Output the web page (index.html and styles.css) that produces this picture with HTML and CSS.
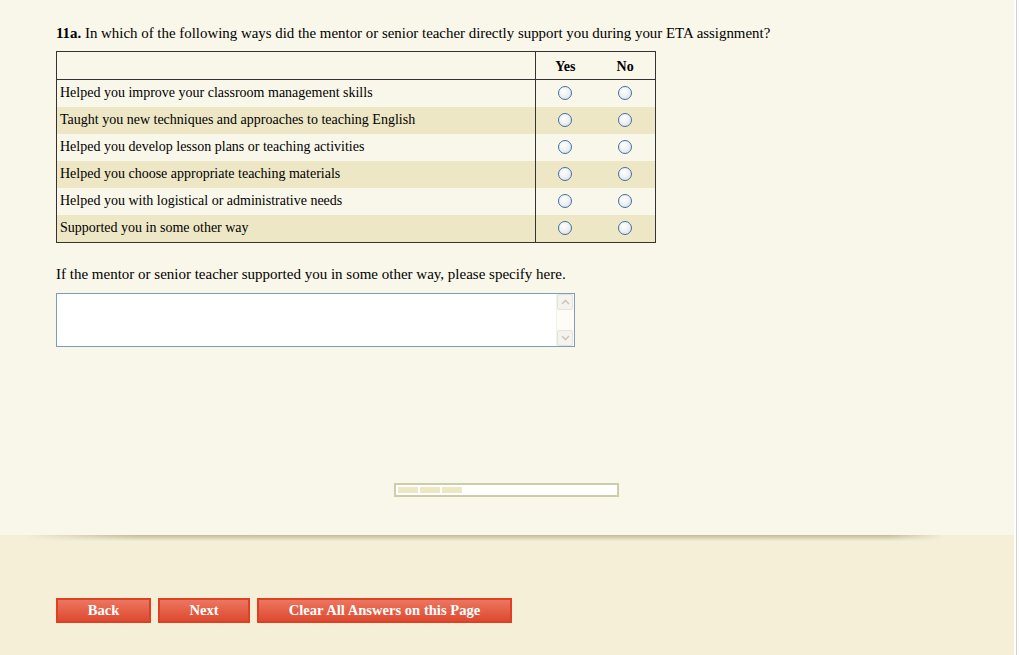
FILE: index.html
```html
<!DOCTYPE html>
<html>
<head>
<meta charset="utf-8">
<link rel="stylesheet" href="styles.css">
</head>
<body>
<div class="frame">
  <div class="page">
    <div class="main">
      <p class="question"><b>11a.</b> In which of the following ways did the mentor or senior teacher directly support you during your ETA assignment?</p>
      <table class="grid">
        <tr class="head"><th class="label"></th><th class="opt">Yes</th><th class="opt">No</th></tr>
        <tr><td class="label">Helped you improve your classroom management skills</td><td class="opt"><span class="radio"></span></td><td class="opt"><span class="radio"></span></td></tr>
        <tr class="alt"><td class="label">Taught you new techniques and approaches to teaching English</td><td class="opt"><span class="radio"></span></td><td class="opt"><span class="radio"></span></td></tr>
        <tr><td class="label">Helped you develop lesson plans or teaching activities</td><td class="opt"><span class="radio"></span></td><td class="opt"><span class="radio"></span></td></tr>
        <tr class="alt"><td class="label">Helped you choose appropriate teaching materials</td><td class="opt"><span class="radio"></span></td><td class="opt"><span class="radio"></span></td></tr>
        <tr><td class="label">Helped you with logistical or administrative needs</td><td class="opt"><span class="radio"></span></td><td class="opt"><span class="radio"></span></td></tr>
        <tr class="alt last"><td class="label">Supported you in some other way</td><td class="opt"><span class="radio"></span></td><td class="opt"><span class="radio"></span></td></tr>
      </table>
      <p class="prompt">If the mentor or senior teacher supported you in some other way, please specify here.</p>
      <div class="textbox">
        <div class="scroll">
          <span class="sbtn"><svg width="9" height="6" viewBox="0 0 9 6"><path d="M1 5 L4.5 1.5 L8 5" fill="none" stroke="#c8cabc" stroke-width="1.6"/></svg></span>
          <span class="sbtn"><svg width="9" height="6" viewBox="0 0 9 6"><path d="M1 1 L4.5 4.5 L8 1" fill="none" stroke="#c8cabc" stroke-width="1.6"/></svg></span>
        </div>
      </div>
      <div class="progress-wrap">
        <div class="progress"><span class="seg"></span><span class="seg"></span><span class="seg"></span></div>
      </div>
    </div>
    <div class="footer">
      <div class="buttons">
        <button class="btn back">Back</button>
        <button class="btn next">Next</button>
        <button class="btn clear">Clear All Answers on this Page</button>
      </div>
    </div>
  </div>
  <div class="edge"></div>
</div>
</body>
</html>
```
FILE: styles.css
```css
html, body {
  margin: 0;
  padding: 0;
  background: #ffffff;
  height: 655px;
  overflow: hidden;
}
.frame {
  display: flex;
  height: 655px;
}
.page {
  width: 1014px;
  display: flex;
  flex-direction: column;
  font-family: "Liberation Serif", "Times New Roman", serif;
  color: #000;
}
.edge {
  width: 1px;
  margin-left: 2px;
  background: #d2d2d2;
}
.main {
  background: #f9f7ea;
  height: 535px;
  padding: 0 0 0 56px;
  box-sizing: border-box;
}
.question {
  margin: 0;
  padding-top: 24px;
  font-size: 14.9px;
  line-height: 18px;
  height: 27px;
}
.grid {
  border-collapse: collapse;
  border: 1px solid #333;
  width: 600px;
  font-size: 14px;
  line-height: 16px;
}
.grid th, .grid td {
  padding: 0;
  vertical-align: middle;
}
.grid tr {
  height: 27px;
}
.grid tr.last {
  height: 28px;
}
.grid tr.head {
  height: 28px;
}
.grid tr.head th {
  border-bottom: 1px solid #333;
  font-size: 14px;
  font-weight: bold;
  padding-top: 2px;
}
.grid .label {
  text-align: left;
  padding-left: 3px;
  border-right: 1px solid #333;
  width: 477px;
}
.grid .opt {
  text-align: center;
  width: 60px;
}
.grid tr.alt {
  background: #ede7c6;
}
.radio {
  display: inline-block;
  width: 12px;
  height: 12px;
  border: 1px solid #42719f;
  border-radius: 50%;
  background: radial-gradient(circle at 40% 35%, #ffffff 0%, #eceef1 55%, #d0d4da 100%);
  vertical-align: middle;
  position: relative;
  top: -1px;
}
.prompt {
  margin: 0;
  box-sizing: border-box;
  height: 50px;
  padding-top: 22px;
  font-size: 15px;
  line-height: 18px;
}
.textbox {
  width: 519px;
  height: 54px;
  box-sizing: border-box;
  border: 1px solid #7f9db9;
  background: #fff;
  display: flex;
  justify-content: flex-end;
}
.scroll {
  width: 17px;
  display: flex;
  flex-direction: column;
  justify-content: space-between;
  background: #fdfdf6;
  border-left: 1px solid #f2f2ea;
}
.sbtn {
  height: 16px;
  width: 16px;
  box-sizing: border-box;
  border: 1px solid #e3e3dc;
  border-radius: 2px;
  background: #f4f4ef;
  display: flex;
  align-items: center;
  justify-content: center;
}
.progress-wrap {
  display: flex;
  padding-top: 136px;
  padding-left: 338px;
}
.progress {
  width: 225px;
  height: 14px;
  box-sizing: border-box;
  border: 2px solid #d0ccaa;
  background: #fff;
  display: flex;
  gap: 2px;
  padding: 2px;
}
.seg {
  width: 20px;
  height: 6px;
  background: #ede7c4;
}
.footer {
  flex: 1;
  background: #f5efd7;
  position: relative;
}
.footer::before {
  content: "";
  position: absolute;
  left: 25px;
  right: 70px;
  top: 0;
  height: 6px;
  background: linear-gradient(to bottom, rgba(150, 140, 100, 0.55), rgba(150, 140, 100, 0));
  -webkit-mask-image: linear-gradient(to right, transparent 0%, #000 12%, #000 94%, transparent 100%);
  mask-image: linear-gradient(to right, transparent 0%, #000 12%, #000 94%, transparent 100%);
}
.buttons {
  display: flex;
  padding: 63px 0 0 56px;
}
.btn {
  height: 25px;
  box-sizing: border-box;
  border: 2px solid #df3f22;
  background: linear-gradient(#eb765f, #dd4a30);
  color: #fff;
  font-family: "Liberation Serif", "Times New Roman", serif;
  font-weight: bold;
  font-size: 14.6px;
  padding: 0;
  margin: 0;
}
.back { width: 95px; margin-right: 7px; }
.next { width: 92px; margin-right: 7px; }
.clear { width: 255px; }
```
